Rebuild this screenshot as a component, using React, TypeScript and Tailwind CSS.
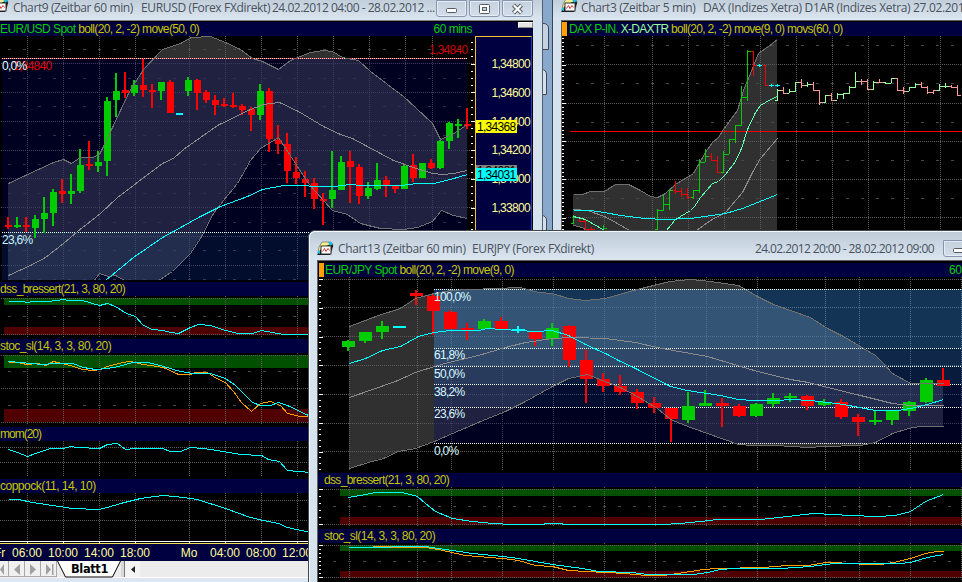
import type { ReactNode } from 'react'

type Tone = 'g' | 'r' | 'c'
// body top, body bottom, high, low, tone
type Candle = [number, number, number, number, Tone]
// x, high, low, close, tone
type Bar = [number, number, number, number, string]

const TONES = { g: '#00cc00', r: '#ff0000', c: '#00ffff' }

const EURUSD: Candle[] = [
  [225, 227, 217, 229, 'r'], [225, 227, 217, 228, 'g'], [225, 227, 217, 232, 'r'], [219, 228, 215, 238, 'g'],
  [213, 219, 197, 233, 'g'], [192, 213, 189, 226, 'g'], [191, 194, 179, 203, 'r'], [191, 194, 174, 204, 'g'],
  [165, 191, 149, 193, 'g'], [164, 166, 141, 170, 'r'], [162, 166, 151, 172, 'g'], [101, 161, 97, 176, 'g'],
  [91, 100, 73, 117, 'g'], [90, 93, 72, 98, 'r'], [85, 93, 80, 96, 'g'], [85, 90, 59, 97, 'r'],
  [90, 92, 84, 108, 'r'], [82, 91, 82, 100, 'g'], [82, 113, 80, 113, 'r'], [113, 115, 113, 115, 'c'],
  [80, 91, 77, 96, 'g'], [80, 93, 79, 110, 'r'], [92, 100, 90, 103, 'r'], [100, 105, 95, 115, 'r'],
  [104, 106, 98, 107, 'r'], [105, 107, 93, 108, 'r'], [106, 110, 104, 115, 'r'], [109, 115, 107, 131, 'r'],
  [91, 115, 84, 120, 'g'], [91, 139, 88, 152, 'r'], [140, 144, 125, 154, 'r'], [144, 171, 133, 183, 'r'],
  [172, 178, 157, 184, 'r'], [179, 183, 171, 197, 'r'], [183, 199, 178, 209, 'r'], [199, 201, 193, 225, 'r'],
  [190, 199, 151, 208, 'g'], [162, 190, 156, 190, 'g'], [161, 167, 151, 203, 'r'], [167, 196, 164, 204, 'r'],
  [188, 196, 182, 199, 'g'], [180, 189, 163, 190, 'g'], [180, 185, 176, 197, 'r'], [186, 189, 186, 193, 'r'],
  [166, 189, 165, 189, 'g'], [165, 178, 154, 182, 'r'], [163, 178, 163, 178, 'g'], [163, 168, 159, 169, 'r'],
  [141, 168, 140, 169, 'g'], [123, 141, 122, 149, 'g'], [124, 125, 119, 138, 'g'], [124, 126, 108, 129, 'r'],
]

const EURJPY: Candle[] = [
  [341, 347, 340, 351, 'g'], [332, 341, 332, 343, 'g'], [326, 332, 321, 339, 'g'], [326, 328, 326, 328, 'c'],
  [293, 296, 290, 305, 'r'], [296, 311, 294, 335, 'r'], [312, 329, 310, 329, 'r'], [328, 330, 323, 340, 'r'],
  [321, 329, 319, 330, 'g'], [321, 329, 317, 329, 'r'], [329, 331, 326, 333, 'c'], [331, 339, 331, 346, 'r'],
  [328, 339, 323, 346, 'g'], [326, 360, 325, 367, 'r'], [360, 379, 350, 403, 'r'], [379, 386, 373, 392, 'r'],
  [386, 392, 375, 395, 'r'], [392, 403, 389, 409, 'r'], [403, 408, 397, 413, 'r'], [408, 419, 408, 442, 'r'],
  [406, 420, 392, 423, 'g'], [403, 406, 390, 406, 'g'], [403, 406, 398, 427, 'r'], [406, 416, 404, 417, 'r'],
  [404, 416, 403, 417, 'g'], [398, 404, 393, 407, 'g'], [396, 398, 393, 402, 'g'], [396, 406, 395, 410, 'r'],
  [402, 405, 399, 406, 'g'], [402, 417, 399, 419, 'r'], [417, 422, 414, 436, 'r'], [420, 422, 411, 425, 'g'],
  [410, 420, 410, 425, 'g'], [402, 411, 401, 416, 'g'], [380, 402, 378, 403, 'g'], [380, 386, 368, 386, 'r'],
]

const G = '#00cc00'
const R = '#f00000'
const LG = '#99ff99'
const LR = '#ff9999'
const C = '#00ffff'

const DAX: Bar[] = [
  [573, 215, 224, 217, G], [579, 217, 222, 221, R], [585, 220, 230, 229, R], [591, 227, 231, 229, R],
  [603, 225, 231, 228, G], [657, 209, 230, 210, G], [663, 195, 211, 204, G], [669, 190, 210, 190, G],
  [675, 181, 194, 191, R], [681, 188, 197, 194, R], [687, 188, 199, 197, R], [693, 190, 199, 190, G],
  [699, 159, 193, 162, G], [705, 149, 162, 156, G], [711, 153, 161, 160, R], [717, 156, 172, 172, R],
  [723, 151, 173, 154, G], [729, 139, 154, 139, G], [735, 125, 143, 125, G], [741, 86, 126, 97, G],
  [747, 50, 101, 51, G], [753, 51, 76, 65, R], [759, 64, 67, 65, C], [765, 65, 85, 85, R],
  [771, 84, 87, 85, C], [777, 84, 87, 85, C],
  [777, 89, 101, 90, LG], [783, 87, 94, 93, LR], [789, 89, 93, 91, LG], [795, 82, 92, 82, LG],
  [801, 79, 88, 85, LR], [807, 82, 87, 84, LG], [813, 82, 91, 90, LR], [819, 90, 105, 102, LR],
  [825, 95, 103, 95, LG], [831, 93, 101, 100, LR], [837, 93, 99, 94, LG], [843, 93, 99, 93, LG],
  [849, 86, 94, 87, LG], [855, 72, 88, 81, LG], [861, 79, 85, 81, LR], [867, 79, 89, 89, LR],
  [873, 81, 90, 82, LG], [879, 79, 83, 82, LR], [885, 82, 84, 83, LG], [891, 79, 83, 78, LG],
  [897, 78, 90, 90, LR], [903, 87, 94, 91, LR], [909, 87, 91, 87, LG], [915, 83, 88, 84, LG],
  [921, 82, 88, 87, LR], [927, 86, 94, 92, LR], [933, 90, 94, 90, LR], [939, 84, 91, 86, LG],
  [945, 83, 88, 86, LG], [951, 85, 88, 87, LR], [957, 85, 96, 95, LR],
]

const USD_X = [27, 63, 99, 135, 189, 225, 261, 297, 333, 369, 405, 432]
const JPY_X = [349, 417, 451, 502, 553, 604, 655, 706, 757, 825, 859, 910, 961]
const DAX_X = [604, 652, 688, 724, 760, 796, 832, 868, 904, 940]

const USD_UPPER =
  '8,183 25,175 53,162 63,159 71,163 80,157 92,157 99,154 102,148 112,127 128,93 143,69 162,49 180,43 191,37 210,36 225,42 240,49 252,58 262,61 278,69 290,60 310,52 323,50 332,51 342,57 358,60 370,71 403,96 415,107 432,123 440,139 452,134 467,124'
const USD_LOWER =
  '93,281 99,273 108,276 115,275 124,280 158,280 172,271 190,253 200,238 213,213 223,200 237,183 250,160 260,148 278,137 308,183 332,210 347,214 360,223 380,228 403,229 417,227 432,221 441,210 453,215 467,218'
const USD_AREA_BOTTOM =
  '467,218 453,215 441,210 432,221 417,227 403,229 380,228 360,223 347,214 332,210 308,183 278,137 260,148 250,160 237,183 223,200 213,213 200,238 190,253 172,271 158,280 124,280 115,275 108,276 99,273 93,280 8,280'

const JPY_UPPER =
  '349,326 378,315 400,308 415,298 434,293 450,290 470,289 495,288 520,287 538,292 552,293 568,298 585,300 605,298 633,290 657,284 670,281 690,279 710,281 738,285 745,289 757,296 773,304 810,317 827,328 843,336 875,355 883,363 892,373 910,383 943,383'
const JPY_LOWER =
  '349,468 368,462 383,458 398,451 415,448 434,441 452,433 485,419 505,411 525,401 552,386 568,378 587,374 602,380 620,387 635,395 657,408 670,419 690,427 707,433 738,444 753,445 777,445 790,446 808,447 823,446 860,445 875,442 892,433 908,428 920,426 943,426'

const DAX_UPPER =
  '573,194 582,194 590,191 604,191 615,184 628,184 640,190 650,196 657,197 665,193 675,184 693,173 705,152 712,142 718,137 723,129 737,110 743,90 750,73 758,53 768,46 777,39'

const reverse = (points: string) => points.split(' ').reverse().join(' ')

type PlotProps = { x: number; y: number; w: number; h: number; children: ReactNode }

// All panels share one coordinate space, so series line up across them
function Plot({ x, y, w, h, children }: PlotProps) {
  return (
    <svg
      className="block shrink-0 bg-black"
      width={w}
      height={h}
      viewBox={`${x} ${y} ${w} ${h}`}
      shapeRendering="crispEdges"
    >
      {children}
    </svg>
  )
}

type GridProps = { xs: number[]; dots?: number[]; dashes?: number[]; x1: number; x2: number; y1: number; y2: number }

function Grid({ xs, dots = [], dashes = [], x1, x2, y1, y2 }: GridProps) {
  return (
    <g stroke="#5c5c5c">
      {xs.map((x) => (
        <line key={x} x1={x + 0.5} x2={x + 0.5} y1={y1} y2={y2} strokeDasharray="1 1" />
      ))}
      {dots.map((y) => (
        <line key={y} x1={x1} x2={x2} y1={y + 0.5} y2={y + 0.5} strokeDasharray="1 1" />
      ))}
      {dashes.map((y) => (
        <line key={y} x1={x1} x2={x2} y1={y + 0.5} y2={y + 0.5} strokeDasharray="3 12" stroke="#484848" />
      ))}
    </g>
  )
}

function Line({ points, color }: { points: string; color: string }) {
  return <polyline points={points} fill="none" stroke={color} transform="translate(0.5 0.5)" />
}

function Candles({ data, start, step, half }: { data: Candle[]; start: number; step: number; half: number }) {
  return (
    <g>
      {data.map(([top, bottom, high, low, tone], i) => {
        const cx = start + step * i
        return (
          <g key={i} fill={TONES[tone]}>
            <rect x={cx - 1} y={high} width={2} height={low - high} />
            <rect x={cx - half} y={top} width={half * 2 + 1} height={Math.max(2, bottom - top)} />
          </g>
        )
      })}
    </g>
  )
}

function Ticks({ x, from, to, step, major, offset }: { x: number; from: number; to: number; step: number; major: number; offset: number }) {
  const count = Math.floor((to - from) / step) + 1
  return (
    <g fill="#ffffff">
      {Array.from({ length: count }, (_, i) => (
        <rect key={i} x={x} y={Math.round(from + i * step)} width={(i - offset) % major === 0 ? 4 : 2} height={1} />
      ))}
    </g>
  )
}

function Strip({ children, className = '' }: { children: ReactNode; className?: string }) {
  return (
    <div className={`flex h-[14px] shrink-0 items-center whitespace-pre bg-[#000040] text-xs leading-[14px] text-[#c8c800] ${className}`}>
      {children}
    </div>
  )
}

function ChartIcon() {
  return (
    <svg className="shrink-0" width="17" height="16" viewBox="0 0 17 16">
      <path d="M2 6 5 1h9l2 3-2 8H1z" fill="#f5ee8c" stroke="#777" strokeWidth="0.8" />
      <path d="M0 14 4 8l11-6 1 3-3 9z" fill="#111" />
      <path d="M11 1h3l2 2-3 2z" fill="#18bde8" />
      <path d="M0 12 3 9v4z" fill="#18bde8" />
      <rect x="4" y="5" width="10" height="8" fill="#fff" stroke="#333" />
      <path d="m5.500 10.500 2-3 1.500 3 2-3 1.500 2" fill="none" stroke="#d33" />
    </svg>
  )
}

function WindowButton({ kind }: { kind: 'min' | 'max' | 'close' }) {
  return (
    <div className="flex h-[17px] w-[31px] shrink-0 items-center justify-center rounded-b-[3px] border border-[#8796ac] bg-gradient-to-b from-[#c6d1df] to-[#d3deea] shadow-[inset_0_0_0_1px_#e3ebf4]">
      <svg width="13" height="12" viewBox="0 0 13 12">
        {kind === 'min' && <rect x="1.500" y="5.500" width="10" height="4" rx="1" fill="#fff" stroke="#555c66" />}
        {kind === 'max' && (
          <>
            <rect x="1.500" y="1.500" width="10" height="9" rx="1" fill="#fff" stroke="#555c66" />
            <rect x="4.500" y="4.500" width="4" height="3" fill="#c6d1df" stroke="#555c66" />
          </>
        )}
        {kind === 'close' && (
          <>
            <path d="m2.500 2 8 8m0-8-8 8" stroke="#555c66" strokeWidth="4.200" />
            <path d="m2.800 2.300 7.400 7.400m0-7.400L2.800 9.700" stroke="#fff" strokeWidth="2.200" />
          </>
        )}
      </svg>
    </div>
  )
}

function EurUsdMain() {
  return (
    <Plot x={0} y={36} w={475} h={246}>
      <polygon points={`${USD_UPPER} ${USD_AREA_BOTTOM}`} fill="#303030" />
      <Grid xs={USD_X} dots={[63, 92, 121, 150, 178, 207, 236, 265]} x1={1} x2={475} y1={36} y2={280} />
      <Grid xs={[]} dashes={[49, 78, 106, 135, 164, 193, 222, 250, 279]} x1={8} x2={467} y1={36} y2={280} />
      <rect x="2" y="58" width="465" height="174" fill="#000060" fillOpacity="0.333" />
      <rect x="2" y="232" width="465" height="48" fill="#062484" fillOpacity="0.333" />
      <line x1="2" x2="467" y1="58.5" y2="58.5" stroke="#ff0000" />
      <line x1="2" x2="467" y1="58.5" y2="58.5" stroke="#ffffff" strokeDasharray="1 1" />
      <line x1="2" x2="467" y1="232.5" y2="232.5" stroke="#d8ffff" strokeDasharray="1 1" />
      <Candles data={EURUSD} start={8} step={9} half={3} />
      <Line points={USD_UPPER} color="#707070" />
      <Line points={USD_LOWER} color="#707070" />
      <Line
        points="8,275 30,265 45,257 63,243 77,231 100,213 117,197 162,163 173,158 183,149 217,125 250,109 263,104 279,102 298,111 323,126 340,134 352,138 393,160 413,167 432,173 442,174 453,173 467,170"
        color="#8a8a8a"
      />
      <Line
        points="105,280 133,257 162,237 173,231 200,216 220,206 247,196 262,189 283,185 333,186 350,184 360,185 400,185 417,183 433,183 450,179 467,174"
        color="#00ffff"
      />
      <rect x="0" y="280" width="475" height="2" fill="#000" />
      <g fontSize="12" letterSpacing="-0.7">
        <text x="13" y="70" fill="#e00000">1,34840</text>
        <text x="2" y="70" fill="#e8ffff">0,0%</text>
        <text x="2" y="244" fill="#c8f4ff">23,6%</text>
        <text x="429" y="54" fill="#d00000">1,34840</text>
      </g>
      <Ticks x={471} from={42} to={280} step={7.2} major={4} offset={3} />
    </Plot>
  )
}

function PriceAxis() {
  return (
    <div className="relative h-[246px] w-[57px] border-l border-r border-t border-l-[#f0c030] border-r-[#2040c0] border-t-[#f0c030] bg-[#000040] pt-[13px] text-xs tracking-[-0.7px] text-[#ffff99]">
      {['1,34800', '1,34600', '1,34400', '1,34200', '1,34000', '1,33800'].map((price) => (
        <div key={price} className="h-[28.8px] pr-[1px] text-right leading-[28.8px]">{price}</div>
      ))}
      <div className="absolute left-0 top-[128px] h-[13px] w-[41px] bg-[#808080] pl-px leading-[13px] text-black">1,34081</div>
      <div className="absolute left-0 top-[131px] h-[13px] w-[41px] bg-[#00ffff] pl-px leading-[14px] text-black">1,34031</div>
      <div className="absolute left-0 top-[83px] h-[13px] w-[41px] bg-[#ffff00] pl-px leading-[14px] text-black">1,34368</div>
    </div>
  )
}

function SheetTabs() {
  return (
    <div className="flex h-[21px] shrink-0 bg-[#dce7f3]">
      <div className="flex h-[17px] w-full items-stretch border-b border-white bg-[#ececec]">
        <svg width="57" height="17" viewBox="0 0 57 17" className="bg-[#f0f0f0]">
          <path d="M8.500 0v16M24.500 0v16M40.500 0v16M56.500 0v16M0 15.500h57" stroke="#a8a8a8" />
          <path d="M4 3v11L0 8.500zM20 3v11l-6-5.500zM30 3v11l6-5.500zM46 3v11l5-5.500zM52 3h1.500v11H52z" fill="#a0a0a0" />
        </svg>
        <div className="relative w-[64px]">
          <svg width="64" height="17" viewBox="0 0 64 17" className="absolute inset-0">
            <path d="M0 0h63l-8 16H8z" fill="#fff" />
            <path d="m.5 0 8 16h47l8-16" fill="none" stroke="#000" />
          </svg>
          <span className="absolute left-[14px] top-0 font-['DejaVu_Sans','Open_Sans',sans-serif] text-[11.5px] font-bold leading-[16px] tracking-[-0.4px] text-black">
            Blatt1
          </span>
        </div>
        <div className="h-[16px] w-[4px] border-r border-r-[#777] bg-[#d8d8d8]" />
        <div className="flex w-[15px] items-center justify-center bg-[#f4f4f4]">
          <svg width="4" height="7" viewBox="0 0 4 7"><path d="M4 0v7L0 3.500z" fill="#222" /></svg>
        </div>
      </div>
    </div>
  )
}

function EurUsdWindow() {
  return (
    <div className="absolute left-0 top-0 flex h-[582px] w-[543px] flex-col border-r border-[#51606f] bg-[#d6e2ee]">
      <div className="flex h-[20px] shrink-0 items-start bg-gradient-to-b from-[#c2ced9] to-[#dbe6f1]">
        <div className="-ml-[8px] -mt-[2px]"><ChartIcon /></div>
        <div className="ml-[4px] flex h-[16px] w-[423px] shrink-0 items-center whitespace-pre font-['Open_Sans','Noto_Sans',sans-serif] text-xs text-[#48525e]">
          <span className="w-[128px] shrink-0 tracking-[-0.4px]">Chart9 (Zeitbar 60 min)</span>
          <span className="w-[131px] shrink-0 tracking-[-0.35px]">EURUSD (Forex FXdirekt)</span>
          <span className="shrink-0 tracking-[-0.49px]">24.02.2012 04:00 - 28.02.2012 ...</span>
        </div>
        <div className="flex gap-[2px]">
          <WindowButton kind="min" />
          <WindowButton kind="max" />
          <WindowButton kind="close" />
        </div>
      </div>
      <div className="flex w-[533px] grow flex-col border-t border-t-[#808080] bg-black pt-px">
        <Strip className="justify-between tracking-[-0.63px]">
          <span><span className="text-[#00d000] tracking-[-0.55px]">EUR/USD Spot</span> boll(20, 2, -2) move(50, 0)</span>
          <span className="flex">
            <span className="mr-[46px] text-[#00d000] tracking-[-0.5px]">60 mins</span>
            <span className="h-[6px] w-[15px] border border-b-[#888] border-l-white border-r-[#888] border-t-white bg-[#e4e4e4]" />
          </span>
        </Strip>
        <div className="flex">
          <EurUsdMain />
          <PriceAxis />
        </div>
        <Strip className="tracking-[-0.68px]">dss_bressert(21, 3, 80, 20)</Strip>
        <Plot x={0} y={296} w={533} h={43}>
          <rect x="4" y="298" width="471" height="7" fill="#005000" />
          <rect x="4" y="327" width="471" height="8" fill="#500000" />
          <Grid xs={USD_X} dots={[298, 334]} x1={1} x2={475} y1={296} y2={338} />
          <Grid xs={[]} dashes={[316]} x1={8} x2={475} y1={296} y2={338} />
          <Line
            points="8,301 21,301 27,302 32,301 48,301 63,299 68,300 82,300 99,305 107,303 115,306 126,313 135,316 143,325 152,329 163,330 170,332 178,333 190,327 198,324 210,325 225,330 238,333 252,333 261,330 283,334 310,334"
            color="#00ffff"
          />
        </Plot>
        <Strip className="tracking-[-0.57px]">stoc_sl(14, 3, 3, 80, 20)</Strip>
        <Plot x={0} y={353} w={533} h={74}>
          <rect x="4" y="355" width="471" height="13" fill="#005000" />
          <rect x="4" y="409" width="471" height="13" fill="#500000" />
          <Grid xs={USD_X} dots={[355, 388, 422]} x1={1} x2={475} y1={353} y2={425} />
          <Grid xs={[]} dashes={[371, 405]} x1={8} x2={475} y1={353} y2={425} />
          <Line
            points="8,362 18,362 26,364 38,363 45,365 53,361 61,363 70,365 82,369 92,370 100,369 107,366 122,362 130,361 143,364 163,367 178,374 190,374 195,372 207,372 216,378 225,382 233,391 241,402 251,411 260,403 270,401 280,405 287,413 300,416 310,416"
            color="#ffa000"
          />
          <Line
            points="8,361 21,362 30,363 43,364 53,363 72,363 83,367 95,369 107,368 118,366 132,362 148,362 163,366 180,371 193,373 210,373 225,378 235,385 243,393 252,402 260,405 270,405 278,402 287,405 308,415"
            color="#00ffff"
          />
        </Plot>
        <Strip className="tracking-[-1px]">mom(20)</Strip>
        <Plot x={0} y={441} w={533} h={38}>
          <Grid xs={USD_X} dots={[447, 462]} x1={0} x2={475} y1={441} y2={477} />
          <Line
            points="8,449 17,452 27,456 38,452 50,448 63,448 70,446 77,447 99,448 107,444 117,443 125,449 135,448 162,448 170,451 180,451 190,447 203,448 223,451 240,454 261,455 268,459 279,461 287,470 310,472"
            color="#00ffff"
          />
        </Plot>
        <Strip className="tracking-[-0.5px]">coppock(11, 14, 10)</Strip>
        <Plot x={0} y={493} w={533} h={51}>
          <Grid xs={USD_X} dots={[500, 520]} x1={0} x2={475} y1={493} y2={541} />
          <Line
            points="8,499 18,499 32,502 52,505 72,508 98,509 107,507 120,503 140,498 162,495 175,496 197,499 225,508 250,517 263,520 278,523 287,527 310,532"
            color="#00ffff"
          />
          <rect x="0" y="541" width="533" height="1" fill="#fff" />
          <rect x="0" y="543" width="533" height="1" fill="#f0e060" />
          {USD_X.map((x) => (
            <rect key={x} x={x} y="541" width="1" height="2" fill="#fff" />
          ))}
        </Plot>
        <div className="flex h-[17px] shrink-0 items-center whitespace-nowrap bg-[#000040] text-xs text-[#ffff99]">
          <span className="w-[9px]"><span className="-ml-[6px]">Fr</span></span>
          {['06:00', '10:00', '14:00', '18:00'].map((time) => (
            <span key={time} className="w-9 text-center">{time}</span>
          ))}
          <span className="ml-[18px] w-9 text-center">Mo</span>
          {['04:00', '08:00', '12:00'].map((time) => (
            <span key={time} className="w-9 text-center">{time}</span>
          ))}
        </div>
        <SheetTabs />
      </div>
    </div>
  )
}

function DaxWindow() {
  return (
    <div className="absolute left-[552px] top-0 flex h-[240px] w-[430px] flex-col border-l border-[#3c4650] bg-[#d6e2ee]">
      <div className="flex h-[20px] shrink-0 items-start bg-gradient-to-b from-[#c2ced9] to-[#dbe6f1] pl-[8px]">
        <div className="-mt-[2px]"><ChartIcon /></div>
        <div className="ml-[3px] flex h-[16px] items-center whitespace-pre font-['Open_Sans','Noto_Sans',sans-serif] text-xs text-[#48525e]">
          <span className="w-[122px] shrink-0 tracking-[-0.35px]">Chart3 (Zeitbar 5 min)</span>
          <span className="tracking-[-0.34px]">DAX (Indizes Xetra) D1AR (Indizes Xetra) 27.02.2012</span>
        </div>
      </div>
      <div className="ml-[8px] flex grow flex-col border-l border-t border-[#606060] bg-black pt-px">
        <Strip className="tracking-[-0.7px]">
          <span className="mr-[2px] h-full w-[5px] bg-[#ffa000]" />
          <span>
            <span className="text-[#00d000]">DAX P-IN.</span> <span className="text-[#99ff99]">X-DAXTR</span> boll(20, 2, -2) move(9, 0) movs(60, 0)
          </span>
        </Strip>
        <Plot x={562} y={36} w={400} h={204}>
          <polygon points={`${DAX_UPPER} 777,240 600,240 586,230 582,227 573,225`} fill="#303030" />
          <Grid xs={DAX_X} dots={[64, 103, 141, 179, 217]} x1={566} x2={962} y1={36} y2={240} />
          <Grid xs={[]} dashes={[45, 83, 122, 160, 198]} x1={576} x2={962} y1={36} y2={240} />
          <rect x="570" y="131" width="392" height="1" fill="#f00000" />
          <Line points={DAX_UPPER} color="#707070" />
          <Line points="573,225 582,227 586,230" color="#707070" />
          <Line points="573,209 587,210 604,216 617,223 629,230" color="#8a8a8a" />
          <Line points="696,230 710,220 725,212 742,192 752,172 760,158 777,138" color="#8a8a8a" />
          {DAX.map(([x, high, low, close, color], i) => (
            <g key={i} fill={color}>
              <rect x={x} y={high} width={1} height={low - high} />
              <rect x={color === C ? x - 2 : x} y={close} width={color === C ? 5 : 4} height={1} />
              <rect x={x - 2} y={i > 0 && DAX[i - 1][0] === x - 6 ? DAX[i - 1][3] : low - 1} width={2} height={1} />
            </g>
          ))}
          <Line points="573,216 585,219 604,230" color="#60ffb0" />
          <Line
            points="666,230 675,219 690,210 694,206 700,197 712,183 718,181 725,174 735,161 741,148 747,129 755,112 760,105 770,99 777,96"
            color="#60ffb0"
          />
          <Line
            points="573,210 590,210 604,212 620,215 645,218 663,219 690,218 725,213 742,208 762,200 777,194"
            color="#00ffff"
          />
          <Ticks x={562} from={38} to={240} step={3.82} major={10} offset={7} />
        </Plot>
      </div>
    </div>
  )
}

const FIBS = [
  { y: 289, h: 59, fill: '#3c9cff', label: '100,0%', baseline: 301 },
  { y: 348, h: 18, fill: '#2c78dc', label: '61,8%', baseline: 359 },
  { y: 366, h: 18, fill: '#1850b8', label: '50,0%', baseline: 378 },
  { y: 384, h: 23, fill: '#082890', label: '38,2%', baseline: 396 },
  { y: 407, h: 36, fill: '#000060', label: '23,6%', baseline: 418 },
  { y: 443, h: 0, fill: 'none', label: '0,0%', baseline: 455 },
]

function EurJpyMain() {
  return (
    <Plot x={318} y={277} w={644} h={196}>
      <polygon points={`${JPY_UPPER} ${reverse(JPY_LOWER)}`} fill="#303030" />
      <Grid xs={JPY_X} dots={[279, 307, 336, 365, 394, 423, 451]} x1={322} x2={962} y1={277} y2={470} />
      {FIBS.map((fib) => (
        <g key={fib.label}>
          <rect x="434" y={fib.y} width="528" height={fib.h} fill={fib.fill} fillOpacity="0.333" />
          <line x1="434" x2="962" y1={fib.y + 0.5} y2={fib.y + 0.5} stroke="#f0ffff" strokeDasharray="1 1" />
        </g>
      ))}
      <Candles data={EURJPY} start={348} step={17} half={6} />
      <Line points={JPY_UPPER} color="#707070" />
      <Line points={JPY_LOWER} color="#707070" />
      <Line
        points="349,397 372,389 395,381 415,372 434,366 448,362 478,355 505,347 525,342 552,338 572,337 605,338 635,342 657,347 673,350 707,356 737,365 757,371 790,379 808,382 823,386 860,395 892,403 910,405 943,405"
        color="#8a8a8a"
      />
      <Line
        points="349,363 365,358 382,350 400,346 418,336 433,332 450,330 478,330 487,328 518,330 535,331 552,330 568,335 585,344 607,354 618,360 635,368 670,386 687,390 720,395 738,399 753,400 777,400 790,399 810,400 827,402 843,404 875,410 897,410 910,408 927,404 943,399"
        color="#00ffff"
      />
      <g fontSize="12" letterSpacing="-0.7" fill="#d8f8ff">
        {FIBS.map((fib) => (
          <text key={fib.label} x="434" y={fib.baseline}>{fib.label}</text>
        ))}
      </g>
      <Ticks x={319} from={279} to={470} step={5.75} major={5} offset={0} />
    </Plot>
  )
}

function EurJpyWindow() {
  return (
    <div className="absolute left-[308px] top-[230px] flex h-[360px] w-[680px] flex-col overflow-hidden rounded-tl-[7px] border-l border-t border-[#40484f] bg-[#d6e2ee] shadow-[inset_1px_1px_0_#f6f9fc]">
      <div className="flex h-[29px] shrink-0 items-center rounded-tl-[6px] border-l border-t border-[#f6f9fc] bg-gradient-to-b from-[#bfcbd8] to-[#dbe6f1] pl-[7px] pt-[5px]">
        <ChartIcon />
        <div className="ml-[4px] flex items-center whitespace-pre font-['Open_Sans','Noto_Sans',sans-serif] text-xs text-[#48525e]">
          <span className="w-[134px] shrink-0 tracking-[-0.35px]">Chart13 (Zeitbar 60 min)</span>
          <span className="w-[283px] shrink-0 tracking-[-0.37px]">EURJPY (Forex FXdirekt)</span>
          <span className="w-[188px] shrink-0 tracking-[-0.6px]">24.02.2012 20:00 - 28.02.2012 09:00</span>
        </div>
        <WindowButton kind="min" />
      </div>
      <div className="ml-[8px] flex grow flex-col border-l border-t border-[#606060] bg-black pt-[2px]">
        <Strip className="pl-px tracking-[-0.66px]">
          <span className="mr-px h-full w-[5px] bg-[#ffa000]" />
          <span className="w-[624px]"><span className="text-[#00d000] tracking-[-0.55px]">EUR/JPY Spot</span> boll(20, 2, -2) move(9, 0)</span>
          <span className="text-[#00d000] tracking-[-0.5px]">60 mins</span>
        </Strip>
        <EurJpyMain />
        <Strip className="pl-[6px] tracking-[-0.68px]">dss_bressert(21, 3, 80, 20)</Strip>
        <Plot x={318} y={487} w={644} h={42}>
          <rect x="340" y="489" width="622" height="7" fill="#005000" />
          <rect x="340" y="517" width="622" height="8" fill="#500000" />
          <Grid xs={JPY_X} dots={[489, 524]} x1={322} x2={962} y1={487} y2={526} />
          <Grid xs={[]} dashes={[506]} x1={333} x2={962} y1={487} y2={526} />
          <Line
            points="348,497 365,494 375,492 402,492 417,496 425,503 435,511 452,518 472,521 492,523 512,524 543,524 545,523 561,523 563,524 662,524 680,523 700,521 717,519 760,519 787,516 813,513 833,514 850,515 877,516 895,515 910,511 925,501 943,494"
            color="#00ffff"
          />
          <Ticks x={319} from={489} to={526} step={7} major={5} offset={0} />
        </Plot>
        <Strip className="pl-[6px] tracking-[-0.57px]">stoc_sl(14, 3, 3, 80, 20)</Strip>
        <Plot x={318} y={543} w={644} h={40}>
          <rect x="340" y="545" width="622" height="6" fill="#005000" />
          <rect x="340" y="571" width="622" height="7" fill="#500000" />
          <Grid xs={JPY_X} dots={[545, 577]} x1={322} x2={962} y1={543} y2={580} />
          <Grid xs={[]} dashes={[561]} x1={333} x2={962} y1={543} y2={580} />
          <Line
            points="373,546 408,547 425,547 438,549 465,555 502,558 518,560 535,565 552,566 568,570 605,572 625,573 633,574 647,575 663,575 677,573 703,569 717,568 763,567 787,565 808,565 825,562 833,562 850,563 867,564 880,564 893,562 910,558 925,553 937,551 943,551"
            color="#ffa000"
          />
          <Line
            points="348,547 390,547 391,546 425,546 438,548 452,550 472,553 502,556 518,558 552,564 582,568 598,571 632,572 647,574 693,574 707,572 720,569 733,568 780,568 810,566 833,563 900,563 910,562 927,557 943,554"
            color="#00ffff"
          />
          <Ticks x={319} from={545} to={580} step={4} major={8} offset={0} />
        </Plot>
      </div>
    </div>
  )
}

export default function App() {
  return (
    <div className="relative h-[582px] w-[962px] overflow-hidden bg-[#88a8cc] font-['Liberation_Sans',Arial,sans-serif]">
      {/* Side tabs peeking out between the windows */}
      <div className="absolute left-[540px] top-[23px] h-[27px] w-[9px] rounded-tr-[5px] border border-[#445] bg-[#c4d2e2]" />
      <div className="absolute left-[540px] top-[69px] h-[26px] w-[7px] rounded-tr-[5px] border border-[#445] bg-[#d4dfea]" />
      <div className="absolute left-[540px] top-[215px] h-[27px] w-[7px] rounded-tr-[5px] border border-[#445] bg-[#d4dfea]" />
      <EurUsdWindow />
      <DaxWindow />
      <EurJpyWindow />
    </div>
  )
}
